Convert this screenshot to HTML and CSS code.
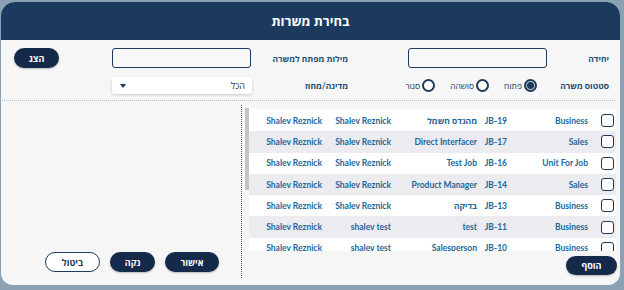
FILE: index.html
```html
<!DOCTYPE html>
<html lang="he" dir="rtl">
<head>
<meta charset="utf-8">
<link rel="stylesheet" href="styles.css">
</head>
<body>
<div class="modal">
  <div class="header">בחירת משרות</div>
  <div class="filters">
    <label class="lbl">יחידה</label>
    <input class="txt" type="text">
    <label class="lbl lbl-2">מילות מפתח למשרה</label>
    <input class="txt" type="text">
    <button class="btn show-btn">הצג</button>
    <label class="lbl">סטטוס משרה</label>
    <div class="radios">
      <span class="radio"><span class="circle checked"></span>פתוח</span>
      <span class="radio"><span class="circle"></span>סושהה</span>
      <span class="radio"><span class="circle"></span>סגור</span>
    </div>
    <label class="lbl lbl-2">מדינה/מחוז</label>
    <div class="select"><span>הכל</span><span class="caret"></span></div>
  </div>
  <div class="divider"></div>
  <div class="body">
    <div class="results">
      <div class="scroll">
        <div class="table">
          <div class="row"><span class="cell chk"><span class="box"></span></span><span class="cell unit">Business</span><span class="cell code">JB-19</span><span class="cell title">מהנדס חשמל</span><span class="cell p1">Shalev Reznick</span><span class="cell p2">Shalev Reznick</span></div>
          <div class="row alt"><span class="cell chk"><span class="box"></span></span><span class="cell unit">Sales</span><span class="cell code">JB-17</span><span class="cell title">Direct Interfacer</span><span class="cell p1">Shalev Reznick</span><span class="cell p2">Shalev Reznick</span></div>
          <div class="row"><span class="cell chk"><span class="box"></span></span><span class="cell unit">Unit For Job</span><span class="cell code">JB-16</span><span class="cell title">Test Job</span><span class="cell p1">Shalev Reznick</span><span class="cell p2">Shalev Reznick</span></div>
          <div class="row alt"><span class="cell chk"><span class="box"></span></span><span class="cell unit">Sales</span><span class="cell code">JB-14</span><span class="cell title">Product Manager</span><span class="cell p1">Shalev Reznick</span><span class="cell p2">Shalev Reznick</span></div>
          <div class="row"><span class="cell chk"><span class="box"></span></span><span class="cell unit">Business</span><span class="cell code">JB-13</span><span class="cell title">בדיקה</span><span class="cell p1">Shalev Reznick</span><span class="cell p2">Shalev Reznick</span></div>
          <div class="row alt"><span class="cell chk"><span class="box"></span></span><span class="cell unit">Business</span><span class="cell code">JB-11</span><span class="cell title">test</span><span class="cell p1">shalev test</span><span class="cell p2">Shalev Reznick</span></div>
          <div class="row"><span class="cell chk"><span class="box"></span></span><span class="cell unit">Business</span><span class="cell code">JB-10</span><span class="cell title">Salesperson</span><span class="cell p1">shalev test</span><span class="cell p2">Shalev Reznick</span></div>
        </div>
        <div class="thumb"></div>
      </div>
      <div class="add-row"><button class="btn">הוסף</button></div>
    </div>
    <div class="side">
      <div class="actions">
        <button class="btn">אישור</button>
        <button class="btn">נקה</button>
        <button class="btn outline">ביטול</button>
      </div>
    </div>
  </div>
</div>
</body>
</html>
```

FILE: styles.css
```css
* { box-sizing: border-box; }
html, body {
  margin: 0;
  padding: 0;
  width: 624px;
  height: 290px;
  overflow: hidden;
  background: #8ba2b5;
  font-family: "Lato", "Open Sans", "Liberation Sans", sans-serif;
}
.modal {
  margin: 2px 4px 0 1px;
  width: 619px;
  height: 283px;
  background: #f6f6f6;
  border-radius: 14px 14px 12px 12px;
  overflow: hidden;
  display: flex;
  flex-direction: column;
}
.header {
  height: 38px;
  flex: none;
  background: #1c3a5d;
  color: #fff;
  font-weight: 700;
  font-size: 13px;
  display: flex;
  align-items: center;
  justify-content: center;
}
.filters {
  flex: none;
  display: grid;
  grid-template-columns: 62px 139px 157px 139px 1fr;
  grid-template-rows: 20px 17px;
  row-gap: 9px;
  align-items: center;
  padding: 8px 11px 6px 13px;
}
.divider {
  flex: none;
  height: 1px;
  border-top: 1px dotted #a9c3d6;
  margin: 0 5px 0 -1px;
}
.lbl {
  font-size: 8.5px;
  font-weight: 700;
  color: #1f4e78;
}
.lbl-2 { padding-right: 60px; }
.txt {
  height: 20px;
  width: 139px;
  border: 1px solid #1c3a5d;
  border-radius: 3px;
  background: #f8f8f8;
  margin: 0;
}
.btn {
  height: 20px;
  border: none;
  border-radius: 10px;
  background: #152a4b;
  color: #fff;
  font-family: inherit;
  font-size: 9px;
  font-weight: 700;
  padding: 0;
  box-shadow: 0 1px 2px rgba(0,0,0,0.25);
}
.show-btn { width: 45px; justify-self: end; }
.radios {
  display: flex;
  align-items: center;
  padding-right: 10px;
  white-space: nowrap;
}
.radio {
  display: flex;
  align-items: center;
  gap: 2px;
  font-size: 8.5px;
  color: #1c3a5d;
}
.radio + .radio { margin-right: 15px; }
.circle {
  width: 13px;
  height: 13px;
  border-radius: 50%;
  border: 2px solid #1c3a5d;
  background: #fff;
}
.circle.checked {
  background: radial-gradient(circle, #1c3a5d 0 3.2px, #c9ced6 3.8px);
}
.select {
  width: 140px;
  height: 17px;
  margin-right: -1px;
  background: #fff;
  border-radius: 3px;
  box-shadow: 0 1px 3px rgba(0,0,0,0.18);
  display: flex;
  align-items: center;
  justify-content: space-between;
  padding: 0 7px 0 8px;
  font-size: 9px;
  color: #333;
}
.caret {
  width: 0;
  height: 0;
  border-left: 3.5px solid transparent;
  border-right: 3.5px solid transparent;
  border-top: 4px solid #1c3a5d;
}
.body {
  flex: 1;
  display: flex;
  min-height: 0;
}
.results {
  width: 378px;
  flex: none;
  display: flex;
  flex-direction: column;
  padding: 7px 3px 0 3px;
}
.scroll {
  height: 143px;
  display: flex;
  margin-right: 1px;
}
.thumb {
  width: 4px;
  height: 82px;
  background: #c4c4c4;
  flex: none;
}
.table {
  flex: 1;
  background: #fff;
  padding-top: 1px;
  margin-top: 1px;
  overflow: hidden;
}
.row {
  height: 21.3px;
  display: grid;
  grid-template-columns: 28px 81px 30px 86px 69px 1fr;
  align-items: center;
  font-size: 8.5px;
  font-weight: 700;
  color: #23679a;
  white-space: nowrap;
}
.row.alt { background: #ebebf0; }
.cell { text-align: right; }
.chk { padding-right: 2px; display: flex; }
.box {
  width: 13px;
  height: 13px;
  border: 1.5px solid #1c3a5d;
  border-radius: 3px;
  background: #fff;
}
.code { direction: ltr; text-align: right; }
.add-row {
  display: flex;
  padding-top: 5px;
}
.add-row .btn { width: 51px; height: 19px; }
.side {
  flex: 1;
  margin: 4px 0 7px 0;
  border-right: 1px dotted #2f6a8c;
  display: flex;
  flex-direction: column;
  justify-content: flex-end;
}
.actions {
  display: flex;
  gap: 10px;
  padding: 0 22px 6px 0;
}
.actions .btn { width: 54px; }
.actions .btn:nth-child(2) { width: 45px; }
.actions .btn.outline {
  width: 55px;
  background: #fff;
  color: #1c3a5d;
  border: 1px solid #1c3a5d;
  box-shadow: none;
}
```
